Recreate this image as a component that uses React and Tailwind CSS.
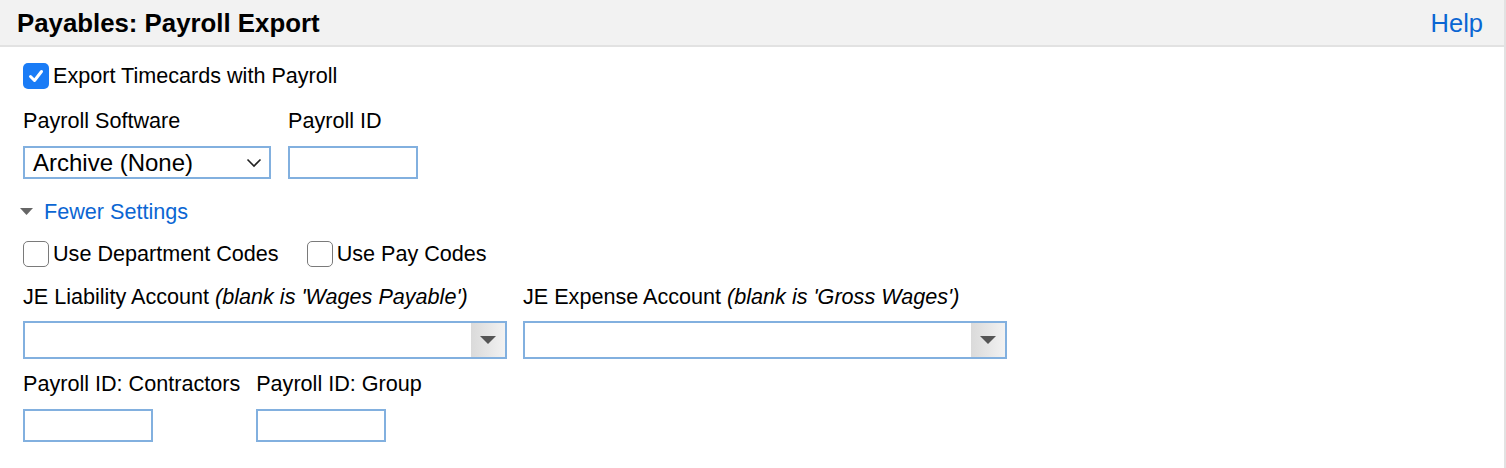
const Check = ({ checked }) =>
  checked ? (
    <span className="flex h-[26px] w-[26px] shrink-0 items-center justify-center rounded-[5px] bg-[#1a7cf6]">
      <svg width="18" height="18" viewBox="0 0 18 18">
        <path d="M3.5 9.5 L7.5 13.5 L14.5 4.5" fill="none" stroke="white" strokeWidth="3" strokeLinecap="round" strokeLinejoin="round" />
      </svg>
    </span>
  ) : (
    <span className="h-[26px] w-[26px] shrink-0 rounded-[5px] border-[1.5px] border-[#7a7a7a] bg-white" />
  );

const TextBox = ({ w }) => (
  <div className={`h-[33px] border-2 border-[#82b0df] bg-white ${w}`} />
);

const Combo = () => (
  <div className="flex h-[38px] w-[484px] border-2 border-[#82b0df] bg-white">
    <div className="flex-1" />
    <div className="flex w-[34px] items-center justify-center bg-gradient-to-r from-[#dadada] to-[#f2f2f2]">
      <svg width="16" height="9" viewBox="0 0 16 9">
        <path d="M0 0 H16 L8 8 Z" fill="#555" />
      </svg>
    </div>
  </div>
);

export default function App() {
  return (
    <div className="w-[1506px] h-[468px] bg-white border-r-2 border-[#e2e2e2] font-['Liberation_Sans',Arial,sans-serif] text-[21.6px] leading-[24px] text-black">
      <div className="flex h-[47px] items-center justify-between border-b-2 border-[#e2e2e2] bg-[#f2f2f2] pl-[17px] pr-[21px]">
        <h1 className="text-[25.8px] font-bold">Payables: Payroll Export</h1>
        <a className="text-[25.5px] text-[#0b66d3]">Help</a>
      </div>

      <div className="pl-[23px]">
        <label className="mt-[16px] flex items-center gap-[4px]">
          <Check checked />
          <span>Export Timecards with Payroll</span>
        </label>

        <div className="mt-[20px] flex gap-[17px]">
          <div className="flex flex-col gap-[13px]">
            <span>Payroll Software</span>
            <div className="flex h-[33px] w-[248px] items-center justify-between border-2 border-[#82b0df] bg-white pl-[8px] pr-[7px] text-[24px]">
              <span>Archive (None)</span>
              <svg width="16" height="10" viewBox="0 0 16 10">
                <path d="M1.5 1.5 L8 8 L14.5 1.5" fill="none" stroke="#222" strokeWidth="1.6" />
              </svg>
            </div>
          </div>
          <div className="flex flex-col gap-[13px]">
            <span>Payroll ID</span>
            <TextBox w="w-[130px]" />
          </div>
        </div>

        <div className="mt-[21px] flex items-center gap-[11px]">
          <svg className="-ml-[3px]" width="13" height="8" viewBox="0 0 13 8">
            <path d="M0 0 H13 L6.5 7 Z" fill="#666" />
          </svg>
          <a className="text-[#0b66d3]">Fewer Settings</a>
        </div>

        <div className="mt-[17px] flex items-center gap-[28px]">
          <label className="flex items-center gap-[4px]">
            <Check />
            <span>Use Department Codes</span>
          </label>
          <label className="flex items-center gap-[4px]">
            <Check />
            <span>Use Pay Codes</span>
          </label>
        </div>

        <div className="mt-[18px] flex gap-[16px]">
          <div className="flex flex-col gap-[12px]">
            <span>
              JE Liability Account <i>(blank is 'Wages Payable')</i>
            </span>
            <Combo />
          </div>
          <div className="flex flex-col gap-[12px]">
            <span>
              JE Expense Account <i>(blank is 'Gross Wages')</i>
            </span>
            <Combo />
          </div>
        </div>

        <div className="mt-[13px] flex gap-[16px]">
          <div className="flex flex-col gap-[13px]">
            <span>Payroll ID: Contractors</span>
            <TextBox w="w-[130px]" />
          </div>
          <div className="flex flex-col gap-[13px]">
            <span>Payroll ID: Group</span>
            <TextBox w="w-[130px]" />
          </div>
        </div>
      </div>
    </div>
  );
}
